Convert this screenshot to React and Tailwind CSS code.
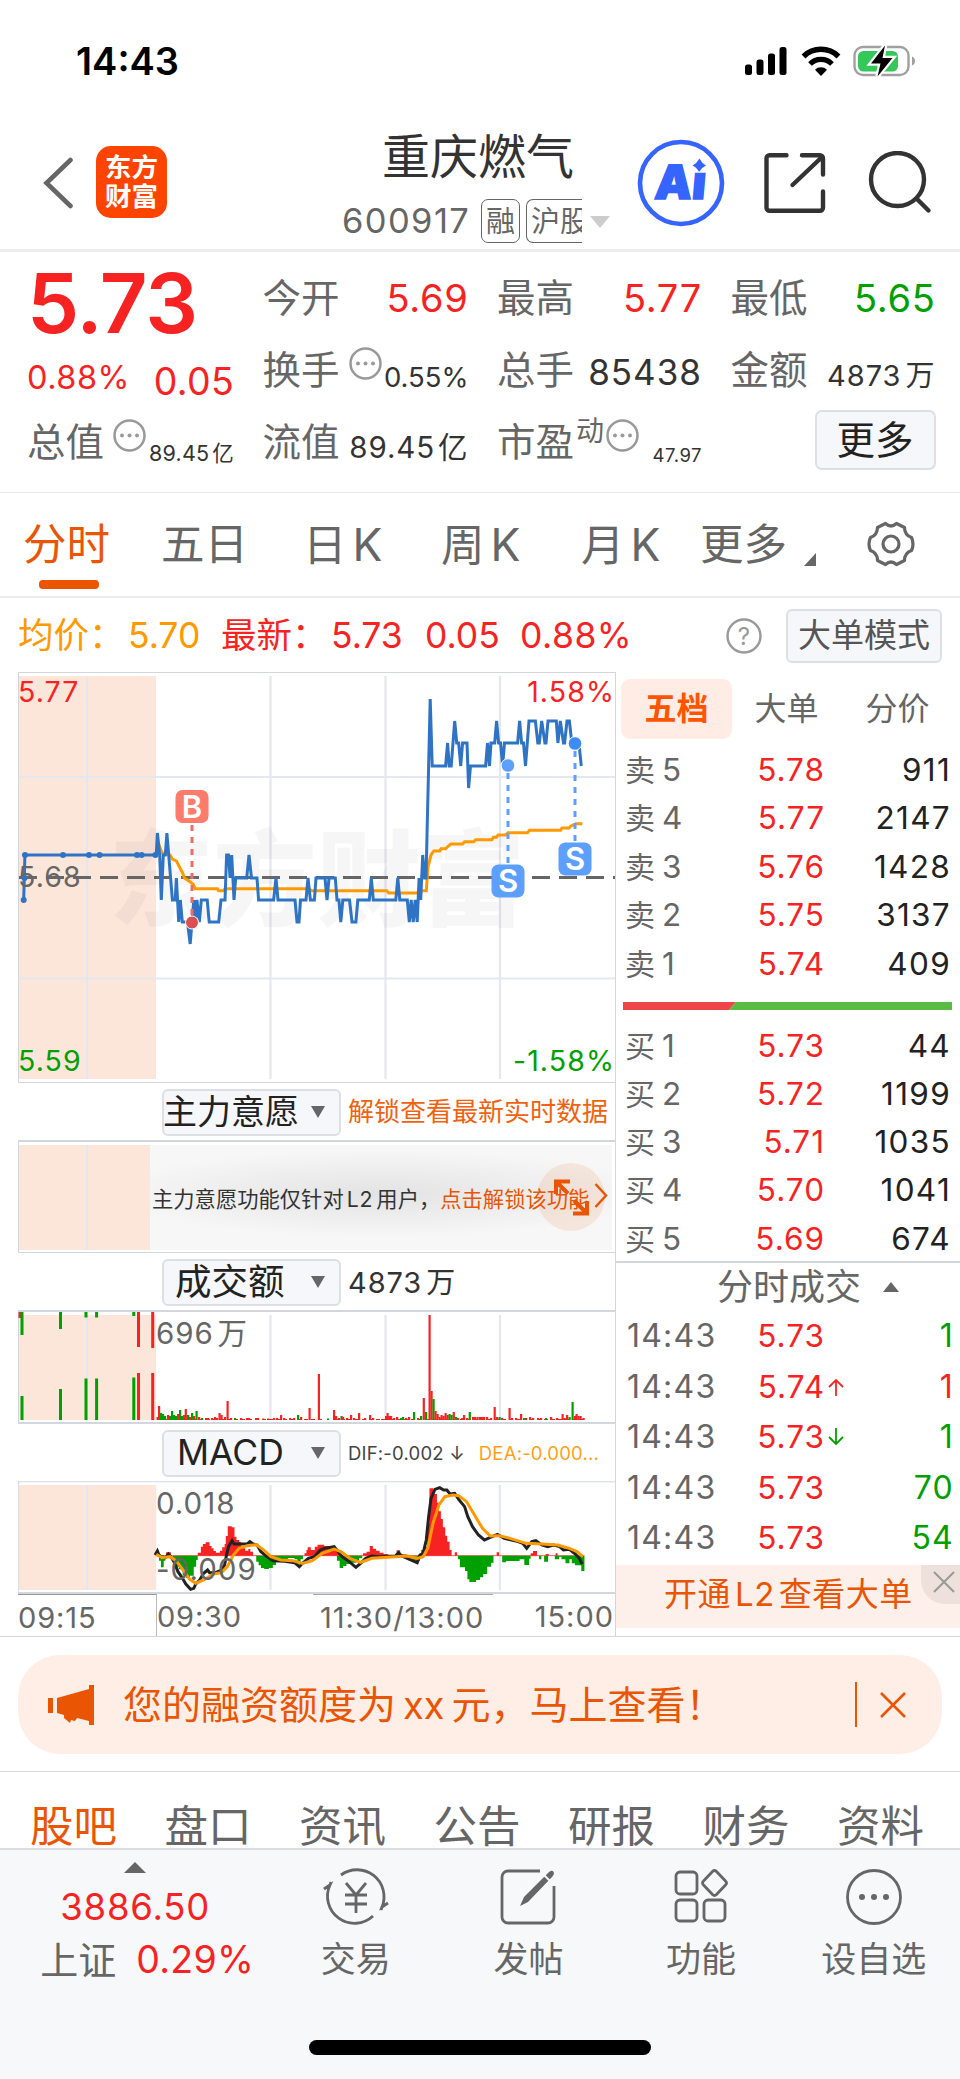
import { useState } from "react";

const RED = "#f72323";
const GREEN = "#00a000";

const periods = [
  { label: "分时", width: "w-[138px]" },
  { label: "五日", width: "w-[142px]" },
  { label: "日K", width: "w-[138px]" },
  { label: "周K", width: "w-[140px]" },
  { label: "月K", width: "w-[119px]" },
];

const sells = [
  ["卖5", "5.78", "911"],
  ["卖4", "5.77", "2147"],
  ["卖3", "5.76", "1428"],
  ["卖2", "5.75", "3137"],
  ["卖1", "5.74", "409"],
];

const buys = [
  ["买1", "5.73", "44"],
  ["买2", "5.72", "1199"],
  ["买3", "5.71", "1035"],
  ["买4", "5.70", "1041"],
  ["买5", "5.69", "674"],
];

const trades = [
  { time: "14:43", price: "5.73", qty: "1", up: false },
  { time: "14:43", price: "5.74", qty: "1", up: true, arrow: "up" },
  { time: "14:43", price: "5.73", qty: "1", up: false, arrow: "down" },
  { time: "14:43", price: "5.73", qty: "70", up: false },
  { time: "14:43", price: "5.73", qty: "54", up: false },
];

const sections = ["股吧", "盘口", "资讯", "公告", "研报", "财务", "资料"];

const priceLine =
  "23.7,900 24.9,855 156.2,855 157.4,833 159.7,855 161.3,900 163.3,855 165.3,855 166.9,833 172.4,900 175.2,900 176.4,878 178.7,922 180.3,900 182.3,922 187.4,922 190.2,944 192,922 193.8,900 195.3,922 196.9,900 199.3,922 201.3,900 207.2,900 209.2,922 218.7,922 221,900 225,900 226.6,855 228.5,855 230.1,878 231.7,855 234,900 235.7,878 246.7,878 249,855 251.5,878 257,878 258.6,900 273.6,900 276,878 278,900 295,900 297,922 299,922 300.5,900 306,900 308,878 310.4,900 314.4,900 316,878 325,878 327,900 329,878 335.3,878 337,900 338.9,900 340.8,922 342.8,900 349.5,900 352,922 355.9,922 357.8,900 369.3,900 371.3,878 373.3,900 395.8,900 397.8,878 399.8,900 407.3,900 409.3,922 411.2,900 413.2,922 415.2,900 417.2,922 419.1,878 420.7,900 422.7,855 424.7,878 426,878 430.2,699 432.2,766 445.6,766 447.6,743 449.2,766 451.2,766 454.7,721 456.7,743 458.7,743 460.7,766 462.6,743 467,743 468.6,788 470.5,766 485.6,766 487.5,743 489.5,766 491,743 494.7,743 496.6,721 498.6,743 500.6,743 502.6,766 504.5,743 517.6,743 519.6,721 521.6,743 523.5,743 525.5,766 529,721 535.4,721 537.8,743 539.3,743 541.7,721 544.9,743 546,743 548,721 556.3,721 557.9,743 560.3,721 563.5,743 564.6,743 567,721 569.4,721 571.8,743 578.9,743 581.3,766";

const avgLine =
  "158,842 162,853 170,855 172.4,859 176.4,861 180,868 182.7,873 184.3,878 189,881 193,884 195.3,888.7 217.5,888.7 218.7,890.7 223,890.7 225,888.7 308.4,888.7 312,890.7 386.7,890.7 388.7,893 417,893 419,890.7 426.3,890.7 428,867 431,855 433.8,851 439.7,851 441,848.7 445.6,848.7 448,846.3 450.8,844 462.6,844 464.6,841.7 473.7,841.7 475.7,839.7 491.9,839.7 493.5,837.3 496.6,837.3 498,835 506,835 508,832.7 527.5,832.7 529.5,830.3 560.7,830.3 562,828 569,828 571,826 576,823.7 582.4,823.7";

// [x, height, direction], 1 = rising minute, 0 = falling minute
const volumes = [
  [157.5, 3, 1], [159, 14, 1], [161, 7, 0], [163, 6, 0], [165, 4, 0], [168, 5, 1], [170, 4, 0],
  [172, 9, 0], [174, 5, 0], [176, 4, 0], [178, 6, 1], [180, 10, 0], [182, 4, 0], [184, 5, 1],
  [185.7, 11, 1], [188, 5, 0], [190, 3, 1], [192, 7, 0], [194, 4, 1], [196.5, 9, 0], [199, 3, 1],
  [202, 2, 0], [206, 2, 1], [208, 2, 1], [212, 2, 1], [215, 3, 1], [217, 2, 1], [219.5, 7, 1],
  [221.5, 5, 1], [225, 3, 1], [227.5, 19, 1], [231, 2, 1], [235, 2, 0], [241, 2, 1], [247, 2, 1],
  [249, 2, 1], [256, 2, 1], [258, 2, 1], [263, 1.5, 1], [268, 1.5, 1], [274, 2, 1], [277, 2, 1],
  [281, 5, 1], [284, 2, 1], [290, 2, 1], [294, 2, 1], [298, 5, 0], [301, 3, 1], [309.5, 12, 1],
  [318.8, 46, 1], [328, 1.5, 0], [334, 10, 1], [336, 4, 1], [339, 2, 1], [341.5, 4, 0], [343, 3, 1],
  [347, 2, 1], [351, 5, 1], [354, 2, 1], [359, 7, 1], [365, 2, 1], [370, 5, 1], [373, 2, 1],
  [378, 1, 1], [382, 1, 1], [386, 4, 1], [387.5, 7, 1], [389, 4, 1], [391, 4, 1], [394, 2, 1],
  [397, 3, 1], [401, 2, 0], [403, 3, 0], [406, 2, 1], [409, 3, 1], [414, 8, 0], [418, 2, 1],
  [421, 4, 0], [423.7, 22, 1], [426, 8, 0], [429.5, 105, 1], [431.5, 29, 1], [433.5, 21, 0],
  [435.5, 9, 1], [437.5, 6, 1], [439.5, 3, 1], [441.5, 5, 1], [443.5, 4, 1], [445.5, 7, 1],
  [447.5, 5, 1], [449.5, 6, 0], [451.5, 5, 0], [453.7, 8, 1], [456, 3, 0], [458, 2, 1], [462, 2, 1],
  [464, 5, 1], [467, 2, 1], [469.7, 8, 0], [473, 3, 1], [475, 3, 1], [477.5, 3, 1], [480, 3, 1],
  [482, 3, 1], [484, 3, 1], [487, 3, 1], [491, 2, 1], [494.6, 13, 1], [497, 3, 1], [499.5, 3, 0],
  [502, 2, 1], [509.5, 12, 1], [512, 2, 1], [516, 2, 1], [521, 6, 1], [524, 2, 0], [526, 2, 1],
  [530, 3, 1], [533, 2, 1], [538, 2, 1], [541, 2, 1], [546, 2, 0], [551, 3, 1], [557, 2, 1],
  [562.5, 6, 1], [564.5, 2, 1], [567, 5, 1], [569.5, 3, 0], [572.5, 18, 0], [575, 4, 1], [576.5, 6, 1],
  [578.5, 4, 1], [580.5, 4, 1], [583.5, 2, 1],
];

// [x, top, bottom, rising] call-auction bars
const auction = [
  [20, 1312, 1318, 1], [22, 1312, 1335, 0], [60.5, 1312, 1329, 0], [86, 1312, 1317.5, 0],
  [96.6, 1312, 1317.5, 0], [133.8, 1312, 1316, 0], [138.5, 1312, 1347, 1], [152.7, 1312, 1348, 1],
  [22, 1396, 1420, 0], [60.5, 1389, 1420, 0], [86, 1378.5, 1420, 0], [96.6, 1378.5, 1420, 0],
  [133.8, 1377.5, 1420, 0], [138.5, 1373, 1420, 1], [152.7, 1373, 1420, 1],
];

function StatusBar() {
  return (
    <div className="flex h-[122px] items-center pl-[76px] pr-[45px]">
      <span className="text-[38px] font-semibold leading-none text-black">14:43</span>
      <div className="ml-auto flex items-center">
        <svg width="44" height="30" viewBox="0 0 44 30">
          <rect x="1" y="18.500" width="7" height="10.500" rx="2.500" />
          <rect x="12.500" y="13.500" width="7" height="15.500" rx="2.500" />
          <rect x="24" y="7.500" width="7" height="21.500" rx="2.500" />
          <rect x="35.500" y="1" width="7" height="28" rx="2.500" />
        </svg>
        <svg className="ml-[13px]" width="40" height="30" viewBox="0 0 40 30">
          <path d="M2.500 10.500a25 25 0 0 1 35 0" fill="none" stroke="#000" strokeWidth="5.500" />
          <path d="M9 18a15.500 15.500 0 0 1 22 0" fill="none" stroke="#000" strokeWidth="5.200" />
          <path d="M14 23.800a8.600 8.600 0 0 1 12 0L20 30z" />
        </svg>
        <svg className="ml-[12px]" width="62" height="32" viewBox="0 0 62 32">
          <rect x="1.500" y="2" width="54" height="28" rx="8.500" fill="none" stroke="#a0a0a0" strokeWidth="2.400" />
          <rect x="5" y="6" width="40" height="20.500" rx="5.500" fill="#34c759" />
          <path d="M59 11.500v9q3-1 3-4.500t-3-4.500z" fill="#a0a0a0" />
          <path d="M32 .5 18 18.500h9.500L24.500 31.500 39.500 13h-10z" fill="#000" stroke="#fff" strokeWidth="4.500" paintOrder="stroke" />
        </svg>
      </div>
    </div>
  );
}

function Header() {
  return (
    <div className="flex h-[130px] border-b-[3px] border-[#ededed]">
      <svg className="ml-[42px] mt-[35px]" width="34" height="52" viewBox="0 0 34 52" fill="none" stroke="#666" strokeWidth="4.600" strokeLinecap="round">
        <path d="M28.500 3 4.500 26l24 23" />
      </svg>
      <div className="ml-[20px] mt-[24px] flex h-[72px] w-[71px] flex-col items-center justify-center rounded-[15px] bg-[#ff4400] text-[26.500px] font-bold leading-[29px] text-white">
        <span>东方</span>
        <span>财富</span>
      </div>
      <div className="ml-[175px] w-[274px]">
        <div className="mt-[10px] flex h-[50px] items-center pl-[40px] text-[48px] leading-none text-[#333]">重庆燃气</div>
        <div className="mt-[17px] flex h-[44px] items-center text-[#666]">
          <span className="w-[139px] text-[34.500px] leading-none tracking-[1.400px]">600917</span>
          <span className="flex h-[44px] w-[39px] shrink-0 items-center justify-center rounded-[7px] border-[1.5px] border-[#666] text-[29px] leading-none">融</span>
          <span className="ml-[6px] flex h-[44px] w-[56px] shrink-0 items-center overflow-hidden whitespace-nowrap rounded-l-[7px] border-[1.5px] border-r-0 border-[#666] pl-[4px] text-[29px] leading-none">沪股</span>
          <svg className="ml-[8px] mt-[1px]" width="20" height="12" viewBox="0 0 20 12">
            <path d="M0 0h20L10 12z" fill="#ccc" />
          </svg>
        </div>
      </div>
      <svg className="ml-[21px] mt-[17px]" width="88" height="88" viewBox="0 0 88 88">
        <circle cx="44" cy="44" r="41" fill="none" stroke="#3564ff" strokeWidth="4.600" />
        <text x="15" y="60" fontSize="47" fontWeight="900" fill="#3564ff" stroke="#3564ff" strokeWidth="1.500" transform="skewX(-5) translate(7 0)">Ai</text>
        <rect x="52" y="17" width="20" height="16.500" fill="#fff" />
        <path d="M62.500 19.500q2 4.500 6.500 7-4.500 2-7 6.500-2-4.500-6.500-6.500 4.500-2.500 7-7z" fill="#3564ff" />
      </svg>
      <svg className="ml-[39px] mt-[31px]" width="62" height="61" viewBox="0 0 62 61" fill="none" stroke="#333" strokeWidth="4.400" strokeLinecap="round">
        <path d="M22.500 2.300H5.500a3 3 0 0 0-3 3v49.500a3 3 0 0 0 3 3h50.500a3 3 0 0 0 3-3V38.500M38 2.300h18a3 3 0 0 1 3 3V21.500M58 4 28.500 32" />
      </svg>
      <svg className="ml-[41px] mt-[29px]" width="66" height="64" viewBox="0 0 66 64" fill="none" stroke="#333" strokeWidth="4.400" strokeLinecap="round">
        <circle cx="30.500" cy="28.500" r="26.500" />
        <path d="M50 48l11.500 11.500" />
      </svg>
    </div>
  );
}

function MoreDots({ className }) {
  return (
    <svg className={className} width="33" height="33" viewBox="0 0 33 33">
      <circle cx="16.500" cy="16.500" r="15" fill="none" stroke="#999" strokeWidth="2.500" />
      <circle cx="9" cy="16.500" r="2" fill="#999" />
      <circle cx="16.500" cy="16.500" r="2" fill="#999" />
      <circle cx="24" cy="16.500" r="2" fill="#999" />
    </svg>
  );
}

function Quote() {
  return (
    <div className="grid h-[241px] grid-cols-[207px_206px_205px_205px] content-start gap-x-[28.500px] border-b border-[#e8e8e8] pl-[27px] pt-[10px] text-[38.500px] leading-none text-[#666]">
      <div className="flex h-[72px] items-center pt-[11px] text-[83px] font-semibold tracking-[-1px] text-[#f72323]">5.73</div>
      <div className="flex h-[72px] items-center justify-between">
        今开<span className="text-[38px] tracking-[0.700px] text-[#f72323]">5.69</span>
      </div>
      <div className="flex h-[72px] items-center justify-between">
        最高<span className="text-[38px] tracking-[0.700px] text-[#f72323]">5.77</span>
      </div>
      <div className="flex h-[72px] items-center justify-between">
        最低<span className="text-[38px] tracking-[0.700px] text-[#00a000]">5.65</span>
      </div>

      <div className="flex h-[72px] items-center justify-between text-[#f72323]">
        <span className="mt-[16px] text-[32.500px] tracking-[0.500px]">0.88%</span>
        <span className="mt-[24px] text-[37.500px] tracking-[0.300px]">0.05</span>
      </div>
      <div className="flex h-[72px] items-center">
        换手
        <MoreDots className="mb-[14px] ml-[9px]" />
        <span className="ml-auto mt-[16px] text-[27.500px] text-[#333]">0.55%</span>
      </div>
      <div className="flex h-[72px] items-center justify-between">
        总手<span className="mt-[5px] text-[35px] tracking-[1px] text-[#333]">85438</span>
      </div>
      <div className="flex h-[72px] items-center justify-between">
        金额<span className="mt-[11px] text-[29px] tracking-[1px] text-[#333]">4873<span className="ml-[4px]">万</span></span>
      </div>

      <div className="flex h-[72px] items-center">
        总值
        <MoreDots className="mb-[14px] ml-[9px]" />
        <span className="ml-auto mt-[23px] text-[21.500px] tracking-[0.200px] text-[#333]">89.45<span className="ml-[3px]">亿</span></span>
      </div>
      <div className="flex h-[72px] items-center justify-between">
        流值<span className="mt-[11px] text-[29.500px] tracking-[0.900px] text-[#333]">89.45<span className="ml-[3px]">亿</span></span>
      </div>
      <div className="flex h-[72px] items-center">
        市盈
        <span className="mb-[22px] ml-[2px] text-[28px]">动</span>
        <MoreDots className="mb-[14px] ml-[2px]" />
        <span className="ml-auto mt-[26px] text-[18.500px] tracking-[0.500px] text-[#333]">47.97</span>
      </div>
      <div className="flex h-[68px] items-center justify-end">
        <button className="flex h-[60px] w-[121px] items-center justify-center rounded-[7px] border-2 border-[#dcdfe4] bg-[#f6f7fa] text-[#222]">更多</button>
      </div>
    </div>
  );
}

function PeriodTabs() {
  const [active, setActive] = useState(0);
  return (
    <div className="flex h-[105px] border-b-2 border-[#ececec] pl-[23px] text-[43.500px] leading-none text-[#666]">
      {periods.map((p, i) => (
        <button
          key={p.label}
          onClick={() => setActive(i)}
          className={
            "flex shrink-0 flex-col items-start whitespace-nowrap pt-[30px] " +
            p.width +
            (i === active ? " text-[#ea5504]" : "")
          }
        >
          {p.label.endsWith("K") ? (
            <span>{p.label[0]}<span className="ml-[6px] text-[44.500px]">K</span></span>
          ) : (
            p.label
          )}
          {i === active && <span className="ml-[16px] mt-[13px] h-[9px] w-[60px] rounded-[4px] bg-[#ea5504]" />}
        </button>
      ))}
      <span className="shrink-0 pt-[30px]">更多</span>
      <svg className="ml-[17px] mt-[60px] shrink-0" width="12" height="13" viewBox="0 0 12 13">
        <path d="M12 0v13H0z" fill="#666" />
      </svg>
      <svg className="ml-[50px] mt-[27px] shrink-0" width="50" height="48" viewBox="0 0 50 48" fill="none" stroke="#666" strokeWidth="3.200" strokeLinejoin="round">
        <path d="M19.500 3.500Q25 8.500 30.500 3.500L38.500 7.500Q38.500 15 45.500 17.500Q48.500 24 45.500 30.500Q38.500 33 38.500 40.500L30.500 44.500Q25 39.500 19.500 44.500L11.500 40.500Q11.500 33 4.500 30.500Q1.500 24 4.500 17.500Q11.500 15 11.500 7.500Z" />
        <circle cx="25" cy="24" r="8" />
      </svg>
    </div>
  );
}

function PriceInfo() {
  return (
    <div className="flex h-[74px] items-center pl-[18px] pr-[18px] pt-[1px] text-[35.500px] leading-none">
      <span className="w-[110px] whitespace-nowrap text-[#ff9900]">均价：</span>
      <span className="w-[93px] text-[#ff9900]">5.70</span>
      <span className="w-[110px] whitespace-nowrap text-[#f72323]">最新：</span>
      <span className="w-[94px] text-[#f72323]">5.73</span>
      <span className="w-[95px] text-[#f72323]">0.05</span>
      <span className="tracking-[0.500px] text-[#f72323]">0.88%</span>
      <svg className="ml-auto" width="36" height="36" viewBox="0 0 36 36">
        <circle cx="18" cy="18" r="16.500" fill="none" stroke="#999" strokeWidth="2.400" />
        <text x="18" y="26.500" fontSize="24" fill="#999" textAnchor="middle">?</text>
      </svg>
      <button className="ml-[24px] flex h-[54px] w-[156px] items-center justify-center rounded-[6px] border-2 border-[#dcdfe4] bg-[#f6f7fa] text-[33px] text-[#555]">大单模式</button>
    </div>
  );
}

function Marker({ x, y, label, color }) {
  return (
    <g>
      <rect x={x - 16.500} y={y} width="33" height="33" rx="7" fill={color} />
      <text x={x} y={y + 27.500} fontSize="31" fontWeight="600" fill="#fff" textAnchor="middle">{label}</text>
    </g>
  );
}

function GridLines({ top, bottom }) {
  return (
    <g stroke="#e4e7ef" strokeWidth="2.200">
      {[87, 270.5, 385.5, 500].map((x) => (
        <line key={x} x1={x} x2={x} y1={top} y2={bottom} />
      ))}
    </g>
  );
}

function PriceChart() {
  return (
    <svg className="block" width="597" height="411" viewBox="18 672 597 411">
      <rect x="19" y="676" width="137" height="403" fill="#fce6da" />
      <GridLines top={676} bottom={1079} />
      <path d="M19 777H615M19 978.500H615" stroke="#e4e7ef" strokeWidth="2.200" />
      <path d="M18.500 1083V672.500H615M18 1082.500H615" fill="none" stroke="#d3d7dd" />
      <text x="109" y="918" fontSize="104" fontWeight="900" fill="#000" opacity="0.032">东方财富</text>
      <line x1="19" x2="615" y1="877.500" y2="877.500" stroke="#666" strokeWidth="2.800" strokeDasharray="18 9" />
      <polyline points={avgLine} fill="none" stroke="#ff9900" strokeWidth="3" />
      <polyline points={priceLine} fill="none" stroke="#2f74c4" strokeWidth="3" />
      {[25, 63, 89, 99.6, 137, 141.6, 155.4].map((x) => (
        <circle key={x} cx={x} cy="855" r="3" fill="#2f74c4" />
      ))}
      <circle cx="24.500" cy="878" r="3" fill="#2f74c4" />
      <circle cx="23.700" cy="900" r="3" fill="#2f74c4" />

      <line x1="192" x2="192" y1="825" y2="916" stroke="#ee6b66" strokeWidth="3" strokeDasharray="6 6" />
      <circle cx="192" cy="922.500" r="6.500" fill="#dc4f50" stroke="#fff" strokeWidth="1" />
      <Marker x={192} y={790} label="B" color="#ff7b6b" />
      <path d="M508 773V863M575 751V841" stroke="#5c9fff" strokeWidth="3" strokeDasharray="6 6" />
      <circle cx="508" cy="765.500" r="6.800" fill="#5c9fff" stroke="#fff" />
      <circle cx="575" cy="743.500" r="6.800" fill="#3d8cf5" stroke="#fff" />
      <Marker x={508} y={864.5} label="S" color="#5c9fff" />
      <Marker x={575} y={842.5} label="S" color="#5c9fff" />

      <g fontSize="28.500" letterSpacing="1.100">
        <text x="18" y="702" fill={RED}>5.77</text>
        <text x="18" y="887" fill="#666">5.68</text>
        <text x="18" y="1071" fill={GREEN}>5.59</text>
        <text x="615" y="702" fill={RED} textAnchor="end">1.58%</text>
        <text x="615" y="1071" fill={GREEN} textAnchor="end">-1.58%</text>
      </g>
    </svg>
  );
}

function IndicatorRow({ label, labelClass, children }) {
  return (
    <div className="flex h-[57px] items-center pl-[144px] pt-[1px] leading-none">
      <button className="flex h-[47px] w-[179px] shrink-0 items-center rounded-[6px] border-2 border-[#dcdfe4] bg-[#f6f7fa] text-[#222]">
        <span className={"shrink-0 whitespace-nowrap " + labelClass}>{label}</span>
        <svg className="ml-auto mr-[14px]" width="14" height="12" viewBox="0 0 14 12">
          <path d="M0 0h14L7 12z" fill="#666" />
        </svg>
      </button>
      <div className="ml-[7px] flex items-center whitespace-nowrap">{children}</div>
    </div>
  );
}

function UnlockPanel() {
  return (
    <div className="flex h-[113px] border-b border-l border-t-2 border-[#d3d7dd] pb-[2px] pt-[3px]">
      <div className="flex w-[131px] bg-[#fce6da]">
        <div className="ml-[67px] w-[2px] bg-[#e4e7ef]" />
      </div>
      <div className="relative flex w-[462px] items-center bg-[#f7f7f7] bg-[radial-gradient(ellipse_60%_42%_at_50%_46%,#e3e3e3,#f7f7f7)] pl-[2px] pt-[5px] text-[21.300px] leading-none text-[#333]">
        <span className="whitespace-nowrap">主力意愿功能仅针对<span className="mx-[3px] tracking-[0.800px]">L2</span>用户，</span>
        <span className="whitespace-nowrap text-[#ea5504]">点击解锁该功能</span>
        <svg className="absolute right-0 top-[17px]" width="76" height="70" viewBox="0 0 76 70" fill="none" stroke="#ea5504">
          <circle cx="35" cy="35" r="34" fill="#ea5504" fillOpacity="0.100" stroke="none" />
          <path d="M20 32V19.500h14M21 20.500l11 11M51 39v12.500H37M50 50.500 38 38.500" strokeWidth="4" />
          <path d="M59.500 22 70 33.500 59.500 45" strokeWidth="2.500" />
        </svg>
      </div>
    </div>
  );
}

function VolumeChart() {
  return (
    <svg className="block" width="597" height="114" viewBox="18 1310 597 114">
      <rect x="19" y="1315" width="137" height="105" fill="#fce6da" />
      <GridLines top={1315} bottom={1420} />
      <path d="M18 1311H615M18 1423H615" stroke="#d3d7dd" strokeWidth="2" />
      <path d="M18.500 1310V1424" stroke="#d3d7dd" />
      {auction.map(([x, top, bottom, up], i) => (
        <rect key={i} x={x - 1.5} y={top} width="3" height={bottom - top} fill={up ? RED : GREEN} />
      ))}
      <path d="M157 1419.500H322M334 1419.500H584" stroke={RED} strokeDasharray="4 3" />
      {volumes.map(([x, h, up]) => (
        <rect key={x} x={x - 1} y={1420 - h} width="2.200" height={h} fill={up ? RED : GREEN} />
      ))}
      <text x="156" y="1343.500" fontSize="29.500" letterSpacing="0.900" fill="#666">696<tspan dx="4">万</tspan></text>
    </svg>
  );
}

function MacdChart() {
  return (
    <div className="relative h-[113px]">
      <svg className="block" width="597" height="113" viewBox="45.500 573 1509.800 339" preserveAspectRatio="none" fill="none">
        <rect x="48" y="585" width="347" height="315" fill="#fce6da" />
        <g stroke="#e4e7ef" strokeWidth="5.500">
          <path d="M220 585V900M684 585V900M975 585V900M1264 585V900" />
        </g>
        <path d="M45 575H1560" stroke="#d3d7dd" strokeWidth="3" />
        <path d="M45 909H1560" stroke="#d3d7dd" strokeWidth="6" />
        <path d="M47 573V909" stroke="#d3d7dd" strokeWidth="2.500" />
        <path d="M395 797H1478" stroke={RED} strokeWidth="2" />
        <path
          fill={RED}
          d="M420 797V787H432V797ZM500 797V788H508V770H513V762H520V757H530V768H535V775H540V783H546V788H556V782H562V772H568V762H571V738H576V709H586V712H593V740H598V750H605V756H610V768H616V775H620V782H628V777H633V785H640V797ZM770 797V790H775V780H778V772H786V780H796V770H803V764H820V768H845V775H852V785H858V797ZM918 797V790H927V785H935V768H943V776H951V782H960V788H970V792H982V797ZM1003 797V781H1012V793H1028V797ZM1065 797V780H1074V770H1080V700H1086V595H1096V612H1105V638H1110V664H1115V687H1120V712H1126V737H1131V755H1137V780H1142V797ZM1150 797V787H1156V797ZM1256 797V787H1262V797ZM1342 797V790H1348V783H1358V797ZM1380 797V792H1388V797ZM1405 797V790H1410V797Z"
        />
        <path
          fill="#00a000"
          d="M402 797V812H407V832H414V812H418V797ZM437 797V812H444V830H452V838H462V855H470V864H480V857H490V830H496V810H500V797ZM648 797V815H654V826H660V834H668V837H680V834H690V825H698V815H712V808H728V804H745V808H752V820H760V808H766V797ZM852 797V812H859V834H868V828H876V822H885V818H900V812H908V805H916V797ZM1035 797V805H1045V812H1062V797ZM1158 797V808H1163V832H1176V843H1182V868H1187V876H1204V870H1214V862H1222V852H1232V830H1242V818H1248V797ZM1270 797V817H1280V813H1314V808H1326V825H1338V806H1342V797ZM1363 797V808H1369V797ZM1376 797V815H1386V797ZM1403 797V808H1414V800H1420V808H1430V820H1440V808H1446V820H1454V826H1470V843H1478V797Z"
        />
        <polyline
          vectorEffect="non-scaling-stroke"
          stroke="#222"
          strokeWidth="3"
          points="392,795 398,783 402,795 408,800 418,803 426,792 432,800 440,815 450,845 460,862 470,882 482,898 490,895 495,882 505,870 515,850 525,840 530,848 545,848 560,840 568,825 572,800 578,770 587,752 592,762 625,762 632,755 640,762 650,765 660,785 675,800 690,812 720,814 745,818 757,830 765,820 780,805 795,800 810,780 820,775 845,770 855,785 865,800 880,812 900,832 912,820 925,805 940,798 960,800 1000,798 1008,788 1015,797 1030,805 1055,818 1062,795 1070,790 1078,750 1084,680 1090,625 1100,598 1112,593 1122,600 1130,600 1138,612 1150,610 1160,628 1175,650 1183,680 1195,710 1210,735 1225,750 1240,742 1258,733 1275,745 1310,755 1322,760 1332,775 1345,755 1355,752 1370,765 1385,770 1400,765 1415,770 1425,780 1440,778 1455,792 1465,805 1472,822"
        />
        <polyline
          vectorEffect="non-scaling-stroke"
          stroke="#ff9900"
          strokeWidth="3"
          points="395,793 410,803 430,800 445,812 460,835 480,868 495,880 515,870 540,852 560,848 575,830 590,795 605,775 625,767 648,764 665,778 685,800 710,810 740,812 765,820 790,812 815,790 845,777 862,785 885,805 912,817 940,805 1000,800 1030,798 1055,805 1070,800 1082,775 1095,700 1110,645 1125,620 1145,615 1160,617 1180,635 1200,675 1220,715 1240,738 1262,737 1290,745 1330,760 1370,762 1410,765 1440,775 1460,785 1474,800"
        />
      </svg>
      <div className="absolute left-[138px] top-[8px] flex flex-col text-[29.500px] leading-none tracking-[1px] text-[#666]">
        <span>0.018</span>
        <span className="mt-[36px]">-0.009</span>
      </div>
    </div>
  );
}

function TimeAxis() {
  return (
    <div className="flex h-[42px] text-[29px] leading-[46px] text-[#666]">
      <div className="w-[139px] border-r border-t border-r-[#bbb] border-t-[#999] tracking-[0.900px]">09:15</div>
      <div className="w-[156px] tracking-[0.800px]">09:30</div>
      <div className="w-[180px] whitespace-nowrap border-t border-[#aaa] pl-[7px] tracking-[1px]">11:30/13:00</div>
      <div className="ml-auto pr-[1px] tracking-[1px]">15:00</div>
    </div>
  );
}

function BookRow({ row, height }) {
  const [label, price, qty] = row;
  return (
    <div className={"flex items-center pl-[9px] pr-[9px] text-[31.500px] leading-none tracking-[1px] " + height}>
      <span className="w-[80px] text-[#666]"><span className="text-[30px]">{label[0]}</span><span className="ml-[6px]">{label[1]}</span></span>
      <span className="w-[120px] text-right text-[#f72323]">{price}</span>
      <span className="ml-auto tracking-[1.300px] text-[#222]">{qty}</span>
    </div>
  );
}

function OrderBook() {
  return (
    <div className="flex-1">
      <div className="flex h-[73px] pl-[5px] pt-[7px] text-[32px] leading-[59px] text-[#666]">
        <span className="h-[60px] w-[111px] rounded-[9px] bg-[#ffece4] text-center font-bold text-[#ff5500]">五档</span>
        <span className="w-[109px] text-center">大单</span>
        <span className="w-[113px] text-center">分价</span>
      </div>
      {sells.map((row) => (
        <BookRow key={row[0]} row={row} height="h-[48.500px]" />
      ))}
      <svg className="mb-[12px] ml-[7px] mt-[14px] block" width="329" height="8" viewBox="0 0 329 8">
        <path d="M0 0h113l-7 8H0z" fill="#ee4648" />
        <path d="M113 0h216v8H106z" fill="#5abb42" />
      </svg>
      {buys.map((row) => (
        <BookRow key={row[0]} row={row} height="h-[48.200px]" />
      ))}
      <div className="mt-[-1.500px] flex h-[50px] items-center border-t-2 border-[#d3d7dd] pl-[101px] text-[36px] leading-none text-[#666]">
        分时成交
        <svg className="ml-[22px] mt-[1px]" width="16" height="10" viewBox="0 0 16 10">
          <path d="M0 10h16L8 0z" fill="#666" />
        </svg>
      </div>
      {trades.map((t, i) => (
        <div key={i} className="flex h-[50.500px] items-center pl-[11px] pr-[6px] text-[32px] leading-none tracking-[1.200px]">
          <span className="w-[97px] text-[#666]">{t.time}</span>
          <span className="w-[101px] text-right text-[31.500px] tracking-[1px] text-[#f72323]">{t.price}</span>
          {t.arrow && (
            <svg className="ml-[3px]" width="16" height="18" viewBox="0 0 16 18" fill="none" stroke={t.up ? RED : GREEN} strokeWidth="1.800">
              {t.arrow === "up" ? <path d="M8 18V2M1 9l7-7 7 7" /> : <path d="M8 0v16M1 9l7 7 7-7" />}
            </svg>
          )}
          <span className={t.up ? "ml-auto text-[#f72323]" : "ml-auto text-[#00a000]"}>{t.qty}</span>
        </div>
      ))}
      <div className="relative mt-[2px] h-[63px] bg-[#fdf0ea] pl-[48px] text-[33px] leading-[58px] tracking-[0.500px] text-[#ea5504]">
        开通<span className="mx-[4px]">L2</span>查看大单
        <span className="absolute right-0 top-0 flex h-[39px] w-[39px] items-center justify-center rounded-bl-[24px] bg-[#eee1db] pl-[6px] pb-[5px]">
          <svg width="22" height="22" viewBox="0 0 22 22" stroke="#999" strokeWidth="2">
            <path d="M1 1l20 20M21 1 1 21" />
          </svg>
        </span>
      </div>
    </div>
  );
}

function Banner() {
  return (
    <div className="border-b border-[#d6d9de] pb-[17px] pl-[18px] pr-[18px] pt-[18px]">
      <div className="flex h-[99px] items-center rounded-[42px] bg-[#feeee6] text-[39px] leading-none text-[#ea5504]">
        <svg className="ml-[30px]" width="46" height="40" viewBox="0 0 46 40" fill="#ea5504">
          <path d="M0 13h5v15H0zM9 13 41 4V0h5v40h-5v-4l-12-3-2 3-4-1-1 3-6-5v-3L9 28z" />
        </svg>
        <span className="ml-[29px] whitespace-nowrap">您的融资额度为<span className="mx-[7px] text-[38px]">xx</span>元，马上查看！</span>
        <span className="ml-auto h-[45px] w-[2px] bg-[#ea5504]" />
        <svg className="ml-[23px] mr-[36px]" width="26" height="26" viewBox="0 0 26 26" stroke="#ea5504" strokeWidth="2.600">
          <path d="M1 1l24 24M25 1 1 25" />
        </svg>
      </div>
    </div>
  );
}

function NavItem({ label, children }) {
  return (
    <div className="flex w-[173px] flex-col items-center pt-[4px] text-[35px] leading-none text-[#666]">
      <svg width="66" height="60" viewBox="0 0 66 60" fill="none" stroke="#666" strokeWidth="2.800">
        {children}
      </svg>
      <span className="mt-[16px] whitespace-nowrap">{label}</span>
    </div>
  );
}

function BottomNav() {
  return (
    <div className="h-[231px] border-t-2 border-[#d9dce0] bg-[#f6f8fa]">
      <div className="flex h-[129px] pt-[12px]">
        <div className="flex w-[270px] flex-col items-center leading-none">
          <svg width="22" height="11" viewBox="0 0 22 11">
            <path d="M0 11h22L11 0z" fill="#666" />
          </svg>
          <span className="mt-[16px] pl-[1px] text-[36.500px] tracking-[0.800px] text-[#f72323]">3886.50</span>
          <span className="mt-[15px] flex items-center pl-[25px] text-[38px] text-[#666]">
            上证<span className="ml-[20px] text-[37.500px] tracking-[0.300px] text-[#f72323]">0.29%</span>
          </span>
        </div>
        <NavItem label="交易">
          <path d="M18 9a27 27 0 0 1 41 32l6-4M59 41l-1 3M50 50A27 27 0 0 1 7 19l-6 4M7 19l1-3" />
          <path d="m23 17 10 12 10-12M22 29h22M22 38h22M33 29v18" />
        </NavItem>
        <NavItem label="发帖">
          <path d="M45 5H13a6 6 0 0 0-6 6v40a6 6 0 0 0 6 6h40a6 6 0 0 0 6-6V20" />
          <path d="m25 40 4-9L54 6q4-3 5 1 0 2-2 4L33 36z" fill="#666" stroke="none" />
          <path d="m48 8 7 7" stroke="#f6f8fa" strokeWidth="2" />
        </NavItem>
        <NavItem label="功能">
          <rect x="8" y="6" width="21" height="22" rx="4" />
          <rect x="8" y="34" width="21" height="21" rx="4" />
          <rect x="36" y="34" width="21" height="21" rx="4" />
          <path d="M44.500 5.500q2-2 4 0l9 9.500q2 2 0 4l-9 9.500q-2 2-4 0l-9-9.500q-2-2 0-4z" />
        </NavItem>
        <NavItem label="设自选">
          <circle cx="33" cy="31" r="26.500" />
          <g fill="#666" stroke="none">
            <circle cx="21" cy="31" r="3" />
            <circle cx="33" cy="31" r="3" />
            <circle cx="45" cy="31" r="3" />
          </g>
        </NavItem>
      </div>
      <div className="mx-auto mt-[61px] h-[15px] w-[342px] rounded-full bg-black" />
    </div>
  );
}

export default function App() {
  return (
    <div className="h-[2079px] w-[960px] overflow-hidden bg-white font-['Inter','Noto_Sans_CJK_SC',sans-serif]">
      <StatusBar />
      <Header />
      <Quote />
      <PeriodTabs />
      <PriceInfo />
      <div className="flex h-[965px] border-b border-[#d3d7dd]">
        <div className="ml-[18px] w-[598px] shrink-0 border-r border-[#d3d7dd]">
          <PriceChart />
          <IndicatorRow label="主力意愿" labelClass="ml-[-1px] text-[34px]">
            <span className="text-[26px] text-[#f0620f]">解锁查看最新实时数据</span>
          </IndicatorRow>
          <UnlockPanel />
          <IndicatorRow label="成交额" labelClass="ml-[11px] text-[36.500px]">
            <span className="text-[29px] tracking-[0.900px] text-[#333]">4873<span className="ml-[4px]">万</span></span>
          </IndicatorRow>
          <VolumeChart />
          <IndicatorRow label="MACD" labelClass="ml-[13px] text-[35.500px]">
            <span className="text-[18.500px] tracking-[0.200px] text-[#444]">DIF:-0.002 ↓</span>
            <span className="ml-[14px] text-[18.500px] tracking-[0.200px] text-[#ff9f1a]">DEA:-0.000...</span>
          </IndicatorRow>
          <MacdChart />
          <TimeAxis />
        </div>
        <OrderBook />
      </div>
      <Banner />
      <div className="flex h-[76px] items-end pl-[30px] text-[43.500px] leading-none">
        {sections.map((s, i) => (
          <span key={s} className={i === 0 ? "w-[134.500px] shrink-0 text-[#ea5504]" : "w-[134.500px] shrink-0 text-[#666]"}>{s}</span>
        ))}
      </div>
      <BottomNav />
    </div>
  );
}
